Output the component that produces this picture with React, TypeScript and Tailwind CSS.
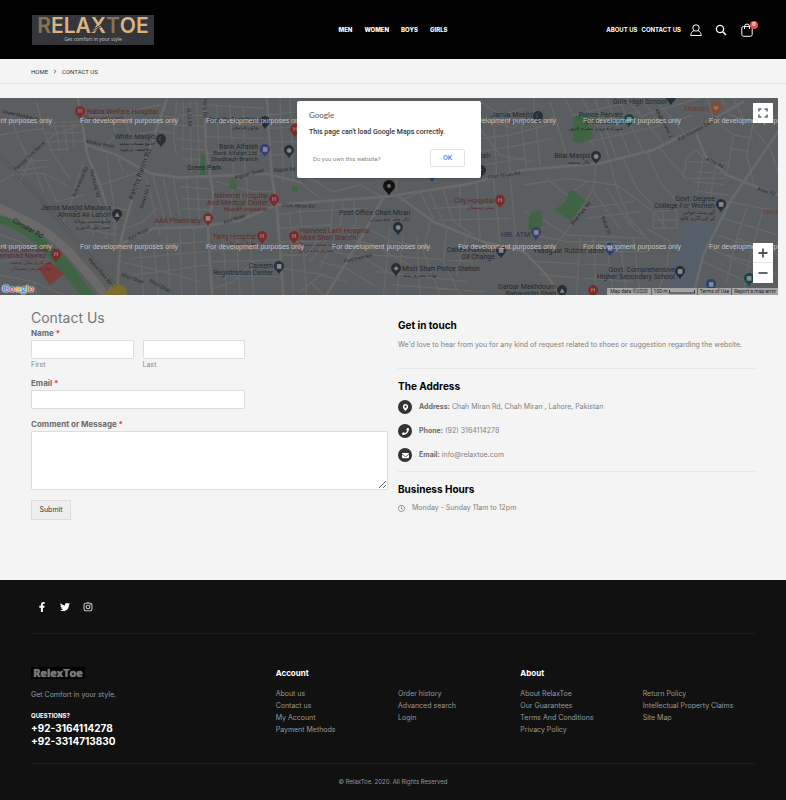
import type { ReactNode } from "react";
import { FaFacebookF, FaInstagram, FaMapMarkerAlt, FaPhone, FaRegClock, FaTwitter } from "react-icons/fa";
import { FaEnvelope } from "react-icons/fa6";

const mainMenu = ["Men", "Women", "Boys", "Girls"];

const footerColumns = [
  {
    title: "Account",
    links: [
      ["About us", "Contact us", "My Account", "Payment Methods"],
      ["Order history", "Advanced search", "Login"],
    ],
  },
  {
    title: "About",
    links: [
      ["About RelaxToe", "Our Guarantees", "Terms And Conditions", "Privacy Policy"],
      ["Return Policy", "Intellectual Property Claims", "Site Map"],
    ],
  },
];

const DARK = "#25292d";
const RED = "#5a2a2a";

type MapLabel = { x: number; y: number; text: string; anchor?: "start" | "end" | "middle"; color?: string; size?: number; rotate?: number };

const mapLabels: MapLabel[] = [
  { x: 87, y: 16, text: "Rabia Welfare Hospital", color: RED },
  { x: 125, y: 21, text: "رابعہ ویلفیئر ہسپتال", color: RED, size: 5, anchor: "end" },
  { x: 155, y: 41, text: "White Masjid", anchor: "end" },
  { x: 155, y: 47, text: "جامع مسجد سفید", anchor: "end", size: 5 },
  { x: 146, y: 53, text: "حنفیہ بریلویہ", anchor: "end", size: 5 },
  { x: 111, y: 112, text: "Jamia Masjid Maulana", anchor: "end" },
  { x: 111, y: 119, text: "Ahmad Ali Lahori", anchor: "end" },
  { x: 111, y: 125, text: "جامع مسجد مولانا", anchor: "end", size: 5 },
  { x: 111, y: 131, text: "احمد علی لاہوری", anchor: "end", size: 5 },
  { x: 201, y: 125, text: "AAA Pharmacy", anchor: "end", color: RED },
  { x: 187, y: 72, text: "Green Park", color: "#15251b" },
  { x: 259, y: 24, text: "Quality Furniture", anchor: "end" },
  { x: 259, y: 31, text: "یوٹوں فرنیچر", anchor: "end", size: 5 },
  { x: 258, y: 51, text: "Bank Alfalah", anchor: "end" },
  { x: 257, y: 57, text: "Bank Alfalah Ltd", anchor: "end", size: 6 },
  { x: 258, y: 63, text: "Shadbagh Branch", anchor: "end", size: 6 },
  { x: 268, y: 100, text: "National Hospital", anchor: "end", color: RED },
  { x: 268, y: 107, text: "And Medical Center", anchor: "end", color: RED },
  { x: 268, y: 113, text: "Нешнел хоруканал", anchor: "end", color: RED, size: 5 },
  { x: 256, y: 141, text: "Tariq Hospital", anchor: "end", color: RED },
  { x: 256, y: 147, text: "طارق ہسپتال", anchor: "end", color: RED, size: 5 },
  { x: 273, y: 170, text: "Careem", anchor: "end" },
  { x: 273, y: 177, text: "Registration Center", anchor: "end" },
  { x: 51, y: 154, text: "Government Mian", anchor: "end", color: RED },
  { x: 46, y: 160, text: "Muhammad Nawaz", anchor: "end", color: RED },
  { x: 51, y: 166, text: "سرکاری میاں محمد", anchor: "end", color: RED, size: 5 },
  { x: 51, y: 172, text: "نواز شریف ہسپتال", anchor: "end", color: RED, size: 5 },
  { x: 339, y: 117, text: "Post Office Chah Miran" },
  { x: 410, y: 123, text: "ڈاک خانہ چاہ میراں", anchor: "end", size: 5 },
  { x: 300, y: 135, text: "Hameed Latif Hospital", color: RED },
  { x: 300, y: 142, text: "Misri Shah Branch", color: RED },
  { x: 338, y: 148, text: "حمید لطیف ہسپتال", anchor: "end", color: RED, size: 5 },
  { x: 334, y: 154, text: "مصری شاہ برانچ", anchor: "end", color: RED, size: 5 },
  { x: 402, y: 173, text: "Misri Shah Police Station" },
  { x: 437, y: 179, text: "تھانہ مصری شاہ", anchor: "end", size: 5 },
  { x: 494, y: 105, text: "City Hospital", anchor: "end", color: RED },
  { x: 494, y: 111, text: "سٹی ہسپتال", anchor: "end", color: RED, size: 5 },
  { x: 530, y: 139, text: "HBL ATM", anchor: "end", color: "#2b2e55" },
  { x: 495, y: 154, text: "Caltex Havoline", anchor: "end" },
  { x: 495, y: 161, text: "Oil Change", anchor: "end" },
  { x: 533, y: 19, text: "Jamia Masjid", anchor: "end" },
  { x: 533, y: 25, text: "جامع مسجد", anchor: "end", size: 5 },
  { x: 490, y: 60, text: "Jamia Masjid Shah", anchor: "end" },
  { x: 613, y: 6, text: "Girls High School" },
  { x: 709, y: 13, text: "Alkaram", anchor: "end", color: "#6b3a26" },
  { x: 623, y: 19, text: "Prince Pervaiz", anchor: "end", color: "#12332f" },
  { x: 623, y: 26, text: "Tomb Lahore", anchor: "end", color: "#12332f" },
  { x: 623, y: 32, text: "شہزادہ پرویز مقبرہ لاہور", anchor: "end", size: 5 },
  { x: 590, y: 60, text: "Bilal Masjid", anchor: "end" },
  { x: 590, y: 66, text: "بلال مسجد", anchor: "end", size: 5 },
  { x: 715, y: 103, text: "Govt. Degree", anchor: "end" },
  { x: 715, y: 110, text: "College For Women", anchor: "end" },
  { x: 715, y: 116, text: "گورنمنٹ خواتین", anchor: "end", size: 5 },
  { x: 715, y: 122, text: "کے لئے ڈگری کالج", anchor: "end", size: 5 },
  { x: 763, y: 116, text: "Ismail", color: "#6b3a26" },
  { x: 604, y: 155, text: "Yaadgaar Rubber Band", anchor: "end" },
  { x: 675, y: 174, text: "Govt. Comprehensive", anchor: "end" },
  { x: 675, y: 181, text: "Higher Secondary School", anchor: "end" },
  { x: 556, y: 191, text: "Darbar Makhdoum", anchor: "end" },
  { x: 556, y: 198, text: "Bahauddin Shah", anchor: "end" },
  { x: 2, y: 15, text: "Street Number 6", size: 5, rotate: 12 },
  { x: 86, y: 45, text: "Khokar Road", size: 5, rotate: 10 },
  { x: 16, y: 73, text: "Farooq Gunj Bazar", size: 5, rotate: -43 },
  { x: 75, y: 99, text: "Koh-e-Noor Rd", size: 5, rotate: -66 },
  { x: 90, y: 72, text: "Mahboob Rd", size: 5, rotate: 76 },
  { x: 133, y: 102, text: "Katcha Rahim Rd", size: 7, rotate: -70 },
  { x: 143, y: 111, text: "Street No 3", size: 5, rotate: -73 },
  { x: 12, y: 124, text: "Circular Rd", size: 7, rotate: 29 },
  { x: 129, y: 143, text: "Aziz Road", size: 5, rotate: -28 },
  { x: 224, y: 126, text: "Aziz Road", size: 5, rotate: -18 },
  { x: 235, y: 81, text: "Afghan Street", size: 5, rotate: -14 },
  { x: 274, y: 74, text: "Rajput Rd", size: 5, rotate: -4 },
  { x: 282, y: 109, text: "Chah Miran Rd", size: 5, rotate: 2 },
  { x: 488, y: 81, text: "Chah Miran Rd", size: 5, rotate: -8 },
  { x: 344, y: 165, text: "Punj Peer Rd", size: 5, rotate: -12 },
  { x: 88, y: 162, text: "Police Flats Rd", size: 5, rotate: 49 },
  { x: 121, y: 178, text: "Misri Shah", size: 5, rotate: 20 },
  { x: 149, y: 184, text: "Misri Shah", size: 5, rotate: 28 },
  { x: 187, y: 10, text: "St 53 Rd", size: 5, rotate: 86 },
  { x: 203, y: 1, text: "Naila Rd", size: 5, rotate: 90 },
  { x: 655, y: 12, text: "Khalid Street 2", size: 5, rotate: 62 },
  { x: 679, y: 43, text: "Kot Khawaja Saeed", size: 5, rotate: -29 },
  { x: 706, y: 62, text: "Afzal Rd", size: 5, rotate: 27 },
  { x: 757, y: 92, text: "Afzal Rd", size: 5, rotate: 18 },
  { x: 573, y: 127, text: "Bilal Park Rd", size: 5, rotate: -50 },
  { x: 601, y: 119, text: "Bahar St", size: 5, rotate: 68 },
];

type MapPin = { x: number; y: number; color?: string; mark?: string };

const mapPins: MapPin[] = [
  { x: 80, y: 14, color: "#7d2a2a", mark: "H" },
  { x: 161, y: 42, mark: "☾" },
  { x: 117, y: 117, mark: "▲" },
  { x: 208, y: 121, color: "#7d2a2a", mark: "■" },
  { x: 56, y: 157, color: "#7d2a2a", mark: "H" },
  { x: 262, y: 139, color: "#7d2a2a", mark: "H" },
  { x: 274, y: 102, color: "#7d2a2a", mark: "H" },
  { x: 294, y: 139, color: "#7d2a2a", mark: "H" },
  { x: 295, y: 32, color: "#7d2a2a", mark: "H" },
  { x: 265, y: 24 },
  { x: 265, y: 52, color: "#393d78", mark: "■" },
  { x: 289, y: 53, mark: "●" },
  { x: 279, y: 169, mark: "■" },
  { x: 398, y: 130, mark: "●" },
  { x: 396, y: 171, mark: "◆" },
  { x: 500, y: 103, color: "#7d2a2a", mark: "H" },
  { x: 481, y: 73 },
  { x: 501, y: 153, mark: "■" },
  { x: 432, y: 77, color: "#243f73" },
  { x: 538, y: 19, mark: "☾" },
  { x: 671, y: 0 },
  { x: 716, y: 10, color: "#8c4a2a", mark: "ψ" },
  { x: 629, y: 22, color: "#17453f", mark: "■" },
  { x: 596, y: 59, mark: "●" },
  { x: 721, y: 107, mark: "■" },
  { x: 536, y: 135, color: "#393d78", mark: "■" },
  { x: 610, y: 151, color: "#243f73", mark: "■" },
  { x: 680, y: 174, mark: "■" },
  { x: 711, y: 187, color: "#243f73", mark: "■" },
  { x: 749, y: 181, color: "#17453f", mark: "■" },
  { x: 562, y: 193, mark: "▲" },
  { x: 593, y: 193, color: "#7d2a2a", mark: "H" },
];

// street geometry, drawn at three times the map's size
const mainRoads = [
  "M505 0 L442 180 L388 340 L362 440 L350 600",
  "M612 0 L618 160 L640 300 L624 400 L636 600",
  "M232 0 L262 180 L300 270 L322 340",
  "M262 150 L350 180 L450 235 L540 248 L800 236 L900 262",
  "M356 450 L460 400 L600 396 L720 376 L830 330",
  "M800 0 L815 240 L830 330 L850 600",
  "M830 330 L1000 316 L1150 306 L1400 268 L1570 225 L1800 205 L1960 165 L2110 90 L2230 20",
  "M1150 306 L1100 400 L1040 500 L980 600",
  "M1190 300 L1300 380 L1450 440 L1572 470 L1640 540 L1680 600",
  "M2334 110 L2190 320 L2110 480 L2080 600",
  "M2090 120 L2115 180 L2180 240 L2334 300",
  "M0 330 L120 390 L220 470 L320 600",
];

const streets = [
  "M0 70 L110 85 L240 80 M0 120 L60 110 L130 100 M110 20 L130 100 L160 180 L210 250",
  "M30 60 L55 130 L90 200 L60 260 M150 95 L235 90 M140 115 L245 112 M145 140 L250 138 M150 165 L205 162",
  "M165 90 L180 165 M190 88 L203 170 M215 88 L222 160 M0 260 L35 240 L160 120 L240 90",
  "M40 240 L130 235 L200 270 M60 225 L140 215 M80 200 L150 195 M90 180 L130 290 M130 235 L170 320 L250 300",
  "M250 200 L210 330 L190 380 M275 210 L300 330 M320 180 L340 320 L350 400 M355 190 L370 230 M300 270 L420 230",
  "M270 60 L330 60 L350 120 L300 160 M330 60 L480 30 M370 50 L390 120 L410 170 M390 120 L460 110 M300 330 L380 345",
  "M250 350 L370 370 M255 375 L350 400 M240 400 L350 420 M270 345 L280 420 M310 350 L320 430 M340 360 L345 440",
  "M480 60 L540 70 M472 80 L530 92 M465 105 L525 115 M530 20 L520 130 L530 180 M550 20 L548 170 M570 20 L575 230 M590 20 L600 230",
  "M530 130 L610 140 M540 160 L610 165 M535 60 L612 62 M530 90 L612 95 M545 190 L618 195",
  "M440 250 L480 420 M460 245 L500 400 M490 250 L520 395 M520 250 L545 395 M540 275 L630 282 M545 310 L636 315 M545 340 L630 345 M560 250 L570 395 M590 245 L600 396",
  "M370 460 L440 450 L620 440 M390 490 L620 470 M400 540 L480 530 L620 510 M420 450 L430 600 M460 440 L475 600 M500 420 L510 600 M540 400 L545 600 M580 398 L590 600",
  "M360 500 L450 520 L600 560 M380 400 L430 380 L470 340 M640 430 L800 425 M640 465 L830 460 M640 500 L830 495 M640 540 L840 545",
  "M670 430 L680 600 M710 425 L720 600 M750 425 L760 600 M640 580 L700 560 L760 500 M625 30 L790 40 M620 80 L790 90 M622 125 L790 130 M625 175 L790 175 M650 30 L660 230 M690 30 L700 235 M730 35 L735 235",
  "M650 260 L760 290 L820 290 M660 310 L780 300 M700 250 L690 380 M740 250 L745 370",
  "M800 60 L900 50 M805 100 L900 95 M810 140 L895 140 M815 180 L900 175 M840 10 L850 260 M870 10 L880 260 M820 270 L830 330",
  "M900 262 L960 310 M930 250 L1000 290 L1080 270 L1150 306 M830 360 L900 350 L1000 345 M835 400 L990 390 M838 440 L960 440 M845 480 L920 480 L960 430 M850 520 L980 540",
  "M870 350 L880 600 M900 345 L920 600 M1000 316 L990 420 L930 500 M1030 316 L1020 400 L960 520 M1060 312 L1070 380 L1040 430 M1000 345 L1100 340 M990 400 L1090 400",
  "M960 500 L1040 520 L1120 570 M1000 470 L1090 490 L1180 540 M1040 430 L1120 450 L1230 510 M900 590 L960 540 L1040 560 M930 560 L970 600 M1100 400 L1180 440 L1300 460",
  "M1170 400 L1150 600 M1210 420 L1190 600 M1250 430 L1260 600 M1290 380 L1270 470 L1320 600 M1340 400 L1330 500 L1380 600 M1400 420 L1370 540 M1120 480 L1420 500 M1130 530 L1400 560 M1180 570 L1450 590",
  "M1200 320 L1260 290 L1300 370 M1290 295 L1340 400 M1330 285 L1360 380 L1420 420 M1380 275 L1380 390 M1300 340 L1480 330 M1320 375 L1530 370 M1480 250 L1500 440 M1430 265 L1440 430 M1530 240 L1550 460",
  "M1440 20 L1500 60 L1572 40 M1440 70 L1540 100 L1600 50 M1450 130 L1530 120 L1640 90 M1440 170 L1560 150 L1660 130 M1450 210 L1570 190 M1480 50 L1490 240 M1520 90 L1530 235 M1560 50 L1580 225 M1440 100 L1500 180 L1600 200",
  "M1600 0 L1620 210 M1650 20 L1700 180 M1690 0 L1720 60 L1780 150 M1740 0 L1800 110 L1830 195 M1780 0 L1850 190 M1820 10 L1890 180 M1850 0 L1930 170",
  "M1720 60 L1900 20 M1740 90 L1920 50 M1770 140 L1940 100 M1720 130 L1760 130 M1880 10 L1990 145 M1920 10 L2020 130 M1960 10 L2050 110 M1930 60 L2030 30 L2130 0 M1950 100 L2080 60",
  "M1572 270 L1700 250 L1850 270 L1960 350 L2000 400 M1640 250 L1700 300 L1760 260 M1790 200 L1780 280 L1720 380 L1660 460 M1572 350 L1640 380 L1700 420 M1750 340 L1900 320 M1760 370 L1920 350",
  "M1830 200 L1850 280 L1900 400 L1930 420 M1870 190 L1910 280 L1960 330 M1940 170 L1980 260 L2040 330 L2100 340 M1980 160 L2060 250 L2180 250 M1780 290 L1860 400 M1820 280 L1890 390 M1700 420 L1940 430",
  "M1600 420 L1700 440 L1860 440 M1590 460 L1780 470 L1940 470 M1600 500 L1820 510 M1620 540 L1900 560 M1740 430 L1730 600 M1780 430 L1790 600 M1820 440 L1840 600 M1860 440 L1880 600 M1900 430 L1920 600",
  "M1960 350 L2030 345 L2030 400 L1960 400 Z M1990 348 L1990 400 M1960 375 L2030 375 M1940 400 L2010 440 L2000 520 L1970 600 M1880 360 L1950 440",
  "M2050 250 L2060 190 L2090 165 L2110 190 M2070 200 L2180 205 M2090 230 L2170 235 M2080 260 L2170 268 M2100 290 L2185 300 M2110 180 L2090 300 M2150 200 L2130 310",
  "M2120 0 L2140 70 L2200 120 L2180 240 M2160 0 L2190 60 L2260 80 L2240 180 L2260 260 M2200 10 L2230 70 M2260 80 L2334 60 M2260 100 L2310 160 L2334 230 M2280 20 L2300 90 M2200 120 L2260 130 M2190 160 L2245 170",
  "M2190 320 L2334 350 M2170 370 L2334 420 M2150 420 L2334 480 M2130 460 L2260 520 L2334 540 M2110 500 L2240 560 M2240 340 L2210 430 L2180 560 M2290 340 L2260 450 L2230 590 M2210 430 L2300 460 M2180 480 L2280 510",
  "M0 420 L60 440 L130 500 L160 560 M0 500 L60 490 M0 540 L100 560 L190 600 M60 570 L50 600 M100 560 L110 600 M1180 20 L1190 290 M930 60 L1180 50",
];

function PinShape({ x, y, color = "#282e36", mark }: MapPin) {
  return (
    <g transform={`translate(${x} ${y})`}>
      <path d="M0 7.500 C-1 4 -5 3 -5 -1 A5 5 0 0 1 5 -1 C5 3 1 4 0 7.500 Z" fill={color} />
      <text x="0" y="1" textAnchor="middle" fontSize="6" fontWeight="700" fill="#85888c">
        {mark ?? "•"}
      </text>
    </g>
  );
}

function MapCanvas() {
  return (
    <svg
      viewBox="0 0 778 197"
      preserveAspectRatio="xMidYMid slice"
      className="block h-full w-full font-['Roboto','DejaVu_Sans',sans-serif]"
      aria-label="Map of Chah Miran, Lahore"
    >
      <rect width="778" height="197" fill="#5b5e61" />
      <g transform="translate(0 -3) scale(.33333)" fill="none" strokeLinejoin="round" strokeLinecap="round">
        <path d="M2060 390 Q2020 480 2000 600 H2090 Q2110 480 2170 385 Q2110 390 2060 390 Z" fill="#555f6c" />
        <path d="M2150 370 L2180 335 L2200 345 L2170 385 Z" fill="#555f6c" />
        {streets.map((d) => (
          <path key={d} d={d} stroke="#696868" strokeWidth="4" />
        ))}
        {mainRoads.map((d) => (
          <path key={d} d={d} stroke="#6b6a69" strokeWidth="8" />
        ))}
        <path d="M0 345 Q120 385 190 455 T330 620" stroke="#6b6a69" strokeWidth="26" />
        <path d="M0 362 Q80 382 140 440 L200 490 L290 610 H250 L150 492 Q90 415 0 386 Z" fill="#3f6444" />
        <path d="M115 520 L150 500 L192 536 L150 572 Z" fill="#7c3d39" />
        <path d="M310 605 L330 575 Q355 560 375 575 L382 605 Z" fill="#7d6c2c" />
        <path d="M0 178 L110 292 L350 570 M0 190 L110 304 L340 574" stroke="#4e5257" strokeWidth="3" />
        <path d="M603 180 H615 V240 H600 Z" fill="#3f6444" />
        <path d="M690 255 L706 248 L712 284 L688 282 Z" fill="#3f6444" />
        <path d="M876 275 H892 V291 H876 Z M710 330 H724 V342 H710 Z" fill="#3f6444" />
        <path d="M1720 65 L1755 58 L1780 128 L1745 143 L1718 140 Z" fill="#3f6444" />
        <path d="M1662 345 L1696 322 L1708 288 L1722 286 L1758 318 L1712 376 Z" fill="#3f6444" />
        <path d="M1590 352 L1624 346 L1628 392 L1608 410 L1584 402 Z" fill="#3f6444" />
      </g>
      {mapPins.map((pin) => (
        <PinShape key={`${pin.x}-${pin.y}`} {...pin} />
      ))}
      {mapLabels.map((l) => (
        <text
          key={`${l.x}-${l.y}`}
          x={l.x}
          y={l.y}
          fontSize={l.size ?? 7}
          fill={l.color ?? DARK}
          textAnchor={l.anchor ?? "start"}
          transform={l.rotate ? `rotate(${l.rotate} ${l.x} ${l.y})` : undefined}
        >
          {l.text}
        </text>
      ))}
      {[25, 151].map((y) =>
        [-46, 80, 206, 332, 458, 583, 709].map((x) => (
          <text key={`${x}-${y}`} x={x} y={y} fontSize="7" fill="#c0c2c4" className="font-['Liberation_Sans',sans-serif]">
            For development purposes only
          </text>
        ))
      )}
      <path d="M389 98 C388 93.500 383 92.500 383 88 A6 6 0 0 1 395 88 C395 92.500 390 93.500 389 98 Z" fill="#111" />
      <circle cx="389" cy="88" r="2" fill="#66696c" />
    </svg>
  );
}

function Header() {
  return (
    <header className="bg-black px-[31px] text-white">
      <div className="grid h-[59px] grid-cols-[1fr_auto_1fr] items-center">
        <a href="#" className="ml-px flex h-[30px] w-[122px] flex-col items-center justify-center justify-self-start bg-[#35363b]">
          <span className="relative flex text-[21px] leading-[18px] font-semibold text-[#d9b380]">
            <span className="text-[#8a7355]">R</span>ELAX<span className="text-[#8a7355]">T</span>OE
            <svg viewBox="0 0 18 18" className="absolute top-0 left-[53px] size-[18px]" stroke="#35363b" strokeWidth="1" fill="none">
              <path d="M2 13 L16 5 M2 15 L16 7" />
            </svg>
          </span>
          <span className="font-['Open_Sans',sans-serif] text-[5px] leading-[8px] text-[#c9c4bd]">Get comfort in your style</span>
        </a>
        <nav className="flex gap-3 text-[6px] font-extrabold uppercase">
          {mainMenu.map((item) => (
            <a key={item} href="#">
              {item}
            </a>
          ))}
        </nav>
        <div className="flex items-center justify-end text-[6px] font-bold uppercase">
          <a href="#">About us</a>
          <a href="#" className="ml-1">Contact us</a>
          <button aria-label="Account" className="ml-2">
            <svg viewBox="0 0 14 14" className="size-[14px]" fill="none" stroke="#fff" strokeWidth="1">
              <circle cx="7" cy="5" r="3.200" />
              <path d="M5 7.600 C3 8.300 1.800 10 1.800 12.500 H12.200 C12.200 10 11 8.300 9 7.600" strokeLinejoin="round" />
            </svg>
          </button>
          <button aria-label="Search" className="ml-3">
            <svg viewBox="0 0 12 12" className="size-3" fill="none" stroke="#fff">
              <circle cx="5" cy="5" r="3.600" strokeWidth="1.300" />
              <path d="M7.800 7.800 L11 11" strokeWidth="1.600" />
            </svg>
          </button>
          <button aria-label="Cart" className="relative mr-[2px] ml-[14px]">
            <svg viewBox="0 0 12 14" className="h-[14px] w-3" fill="none" stroke="#fff" strokeWidth="1">
              <rect x=".8" y="3.500" width="10.400" height="9.800" rx="1.800" />
              <path d="M3.500 6 V3.500 A2.500 2.500 0 0 1 8.500 3.500 V6" />
            </svg>
            <span className="absolute -top-[2px] -right-[5px] flex size-2 items-center justify-center rounded-full bg-[#ee4a45] text-[5px] leading-none">
              0
            </span>
          </button>
        </div>
      </div>
    </header>
  );
}

function MapSection() {
  return (
    <section className="relative mt-[14px] mr-2 h-[197px] overflow-hidden">
      <MapCanvas />
      <div className="absolute top-[3px] left-1/2 flex h-[77px] w-[184px] -translate-x-1/2 flex-col rounded-[2px] bg-white px-3 font-['Roboto',sans-serif] shadow">
        <div className="mt-2 font-['Lato',sans-serif] text-[8px] leading-[12px] font-medium text-[#5f6368]">Google</div>
        <p className="mt-[6px] text-[7px] leading-[10px] font-medium text-[#333]">This page can't load Google Maps correctly.</p>
        <div className="mt-3 flex items-center justify-between pr-1 pl-1">
          <a href="#" className="text-[6px] text-[#858585]">Do you own this website?</a>
          <button className="h-[18px] w-[35px] rounded-[2px] border border-[#e3e3e3] text-[7px] font-medium text-[#4285f4]">OK</button>
        </div>
      </div>
      <button aria-label="Toggle fullscreen view" className="absolute top-[5px] right-[5px] flex size-5 items-center justify-center bg-white">
        <svg viewBox="0 0 10 10" className="size-[10px]" fill="none" stroke="#666" strokeWidth="1.500">
          <path d="M1 3.500 V1 H3.500 M6.500 1 H9 V3.500 M9 6.500 V9 H6.500 M3.500 9 H1 V6.500" />
        </svg>
      </button>
      <div className="absolute right-[5px] bottom-3 w-5 divide-y divide-[#e6e6e6] bg-white">
        <button aria-label="Zoom in" className="flex h-5 w-full items-center justify-center">
          <svg viewBox="0 0 10 10" className="size-[10px]" stroke="#555" strokeWidth="1.800">
            <path d="M5 .5 V9.500 M.5 5 H9.500" />
          </svg>
        </button>
        <button aria-label="Zoom out" className="flex h-5 w-full items-center justify-center">
          <svg viewBox="0 0 10 10" className="size-[10px]" stroke="#555" strokeWidth="1.800">
            <path d="M.5 5 H9.500" />
          </svg>
        </button>
      </div>
      <a
        href="#"
        className="absolute bottom-0 left-[2px] font-['Lato',sans-serif] text-[10px] leading-[14px] font-bold [text-shadow:0_0_1px_#fff,0_0_1px_#fff,0_0_2px_#fff]"
      >
        <span className="text-[#4285f4]">G</span>
        <span className="text-[#ea4335]">o</span>
        <span className="text-[#e5a800]">o</span>
        <span className="text-[#4285f4]">g</span>
        <span className="text-[#34a853]">l</span>
        <span className="text-[#ea4335]">e</span>
      </a>
      <div className="absolute right-0 bottom-0 flex h-[7px] items-center divide-x divide-[#666] bg-[#a2a4a5] font-['Roboto',sans-serif] text-[5px] leading-[7px] text-[#222]">
        <span className="px-[3px]">Map data ©2020</span>
        <span className="flex items-center gap-px px-[2px]">
          100 m
          <svg viewBox="0 0 26 4" className="h-1 w-[26px]" fill="none" stroke="#333">
            <path d="M.5 0 V3 H25.500 V0" />
          </svg>
        </span>
        <a href="#" className="px-[2px]">Terms of Use</a>
        <a href="#" className="px-[2px]">Report a map error</a>
      </div>
    </section>
  );
}

const inputClass = "block h-[19px] w-full rounded-[1px] border border-[#ddd] bg-white px-1 text-[8px] outline-none focus:border-[#999]";
const labelClass = "block text-[8px] leading-[12px] font-bold text-[#6b6b6b]";

function Required() {
  return <span className="text-[#f33]">*</span>;
}

function ContactForm() {
  return (
    <form onSubmit={(e) => e.preventDefault()}>
      <h1 className="text-[14px] leading-[18px] text-[#777]">Contact Us</h1>
      <fieldset className="w-3/5">
        <legend className={labelClass}>
          Name <Required />
        </legend>
        <div className="mt-px grid grid-cols-2 gap-[9px]">
          <div>
            <input id="first" name="first" type="text" className={inputClass} />
            <label htmlFor="first" className="block text-[7px] leading-[12px] text-[#888]">First</label>
          </div>
          <div>
            <input id="last" name="last" type="text" className={inputClass} />
            <label htmlFor="last" className="block text-[7px] leading-[12px] text-[#888]">Last</label>
          </div>
        </div>
      </fieldset>
      <div className="mt-[6px] w-3/5">
        <label htmlFor="email" className={labelClass}>
          Email <Required />
        </label>
        <input id="email" name="email" type="email" className={`${inputClass} mt-px`} />
      </div>
      <div className="mt-[9px]">
        <label htmlFor="message" className={labelClass}>
          Comment or Message <Required />
        </label>
        <textarea
          id="message"
          name="message"
          className="mt-px block h-[59px] w-full resize-y rounded-[1px] border border-[#ddd] bg-white p-1 text-[8px] outline-none focus:border-[#999]"
        />
      </div>
      <button type="submit" className="mt-[10px] h-5 w-10 border border-[#ddd] bg-[#eee] text-[7px] text-[#333]">
        Submit
      </button>
    </form>
  );
}

function InfoRow({ icon, label, children }: { icon: ReactNode; label: string; children: ReactNode }) {
  return (
    <li className="flex items-center gap-[7px]">
      <span className="flex size-[14px] items-center justify-center rounded-full bg-[#333] text-[7px] text-white">{icon}</span>
      <span>
        <strong className="font-bold text-[#6b6b6b]">{label}:</strong> {children}
      </span>
    </li>
  );
}

function ContactInfo() {
  return (
    <div className="pt-[9px] text-[7px] leading-[14px] text-[#808080]">
      <h2 className="text-[10px] font-bold text-black">Get in touch</h2>
      <p className="mt-[6px]">We'd love to hear from you for any kind of request related to shoes or suggestion regarding the website.</p>
      <hr className="mt-4 border-[#e7e7e7]" />
      <h2 className="mt-[10px] text-[10px] font-bold text-black">The Address</h2>
      <ul className="mt-[7px] flex flex-col gap-[10px]">
        <InfoRow icon={<FaMapMarkerAlt />} label="Address">Chah Miran Rd, Chah Miran , Lahore, Pakistan</InfoRow>
        <InfoRow icon={<FaPhone />} label="Phone">(92) 3164114278</InfoRow>
        <InfoRow icon={<FaEnvelope />} label="Email">info@relaxtoe.com</InfoRow>
      </ul>
      <hr className="mt-[9px] border-[#e7e7e7]" />
      <h2 className="mt-[10px] text-[10px] font-bold text-black">Business Hours</h2>
      <p className="mt-[5px] flex items-center gap-[7px]">
        <FaRegClock className="size-[7px]" />
        Monday - Sunday 11am to 12pm
      </p>
    </div>
  );
}

function Footer() {
  return (
    <footer className="mt-[60px] bg-[#111] px-[31px] text-[7px] leading-[12px] text-[#999]">
      <div className="flex items-center gap-[13px] border-b border-[#1e1e1e] pt-[22px] pb-[21px] pl-[6px] text-[10px] text-white">
        <a href="#" aria-label="Facebook"><FaFacebookF /></a>
        <a href="#" aria-label="Twitter"><FaTwitter /></a>
        <a href="#" aria-label="Instagram"><FaInstagram /></a>
      </div>
      <div className="grid grid-cols-3 gap-[10px] border-b border-[#1e1e1e] pt-[33px] pb-[15px]">
        <div>
          <div className="w-[54px] bg-black text-center font-['Open_Sans',sans-serif] text-[11px] leading-[12px] font-bold text-[#777] [text-shadow:0_0_1px_#aaa]">
            RelexToe
          </div>
          <p className="mt-[10px]">Get Comfort in your style.</p>
          <p className="mt-[9px] text-[6px] font-bold text-white">QUESTIONS?</p>
          <p className="text-[10px] leading-[13px] font-bold text-white">
            +92-3164114278
            <br />
            +92-3314713830
          </p>
        </div>
        {footerColumns.map((col) => (
          <div key={col.title}>
            <h3 className="text-[8px] font-bold text-white">{col.title}</h3>
            <div className="mt-[9px] grid grid-cols-2 gap-[10px]">
              {col.links.map((list) => (
                <ul key={list[0]}>
                  {list.map((link) => (
                    <li key={link} className="whitespace-nowrap">
                      <a href="#" className="hover:text-white">{link}</a>
                    </li>
                  ))}
                </ul>
              ))}
            </div>
          </div>
        ))}
      </div>
      <p className="pt-3 pb-4 text-center text-[6px]">© RelaxToe. 2020. All Rights Reserved</p>
    </footer>
  );
}

export default function App() {
  return (
    <div className="min-h-screen bg-[#f4f4f4] font-['Inter',sans-serif]">
      <Header />
      <nav aria-label="Breadcrumb" className="flex h-[25px] items-center gap-[5px] border-b border-[#e3e3e3] px-[31px] font-['Roboto',sans-serif] text-[6px] text-[#333] uppercase">
        <a href="#">Home</a>
        <svg viewBox="0 0 4 6" className="h-[5px] w-1" fill="none" stroke="#333" strokeWidth="1">
          <path d="M1 1 L3 3 L1 5" />
        </svg>
        <span>Contact us</span>
      </nav>
      <MapSection />
      <main className="mt-[14px] grid grid-cols-2 gap-[10px] px-[31px]">
        <ContactForm />
        <ContactInfo />
      </main>
      <Footer />
    </div>
  );
}
